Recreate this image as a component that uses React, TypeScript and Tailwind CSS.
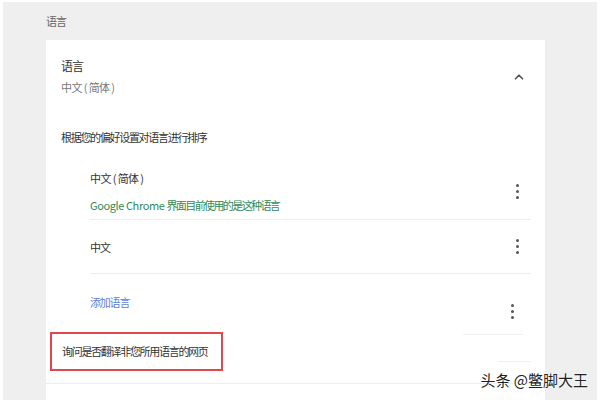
import { ChevronUp } from 'lucide-react';

const font = { fontFamily: '"Noto Sans CJK SC", "Noto Sans", sans-serif' };

function Kebab({ className = '' }: { className?: string }) {
    return (
        <div className={`flex flex-col items-center gap-[3px] w-[10px] ${className}`}>
            <span className="w-[3px] h-[3px] rounded-full bg-[#555]" />
            <span className="w-[3px] h-[3px] rounded-full bg-[#555]" />
            <span className="w-[3px] h-[3px] rounded-full bg-[#555]" />
        </div>
    );
}

export default function App() {
    return (
        <div
            className="relative w-[600px] h-[400px] overflow-hidden bg-[#efefef] border-t-2 border-r-[3px] border-l-[3px] border-white"
            style={font}
        >
            <div className="pl-[43px] w-[542px] flex flex-col h-full">
                {/* page heading */}
                <div className="h-[38px] flex items-center text-[11px] tracking-[-1px] text-[#666]">语言</div>

                {/* card */}
                <div className="flex-1 bg-white">
                    <div className="flex justify-between pl-[15px] pr-[19px] pt-[17px]">
                        <div>
                            <p className="text-[12px] tracking-[-1px] leading-[18px] text-[#333]">语言</p>
                            <p className="mt-[2px] text-[11px] tracking-[-0.6px] leading-[20px] text-[#777]">中文 ( 简体 )</p>
                        </div>
                        <ChevronUp className="w-[14px] h-[14px] mt-[13px] text-[#555]" strokeWidth={3} />
                    </div>

                    <p className="mt-[30px] pl-[15px] text-[11px] tracking-[-1.3px] leading-[20px] text-[#333]">根据您的偏好设置对语言进行排序</p>

                    {/* language list */}
                    <div className="ml-[44px] mr-[14px] mt-[17px]">
                        <div className="h-[56px] flex items-center justify-between border-b border-[#eeeeee] pr-[9px]">
                            <div className="flex flex-col gap-[7px]">
                                <p className="text-[11px] tracking-[-0.6px] leading-[20px] text-[#333]">中文 ( 简体 )</p>
                                <p className="text-[11px] leading-[20px] text-[#2f8a55]">
                                    <span className="tracking-[-0.4px]">Google Chrome </span>
                                    <span className="tracking-[-1.6px]">界面目前使用的是这种语言</span>
                                </p>
                            </div>
                            <Kebab />
                        </div>
                        <div className="h-[54px] flex items-center justify-between border-b border-[#eeeeee] pr-[9px]">
                            <p className="text-[11px] tracking-[-1px] leading-[20px] text-[#333]">中文</p>
                            <Kebab />
                        </div>
                        <div className="h-[56px] flex items-center justify-between pr-[14px]">
                            <p className="text-[11px] tracking-[-1.2px] leading-[20px] text-[#5b7fdc]">添加语言</p>
                            <Kebab className="mt-[18px]" />
                        </div>
                    </div>

                    {/* translate option */}
                    <div className="flex items-start justify-between">
                        <div className="ml-[4px] mt-[2px] w-[173px] h-[39px] border-2 border-[#e3474d] flex items-center pl-[10px] text-[11px] tracking-[-1.3px] whitespace-nowrap text-[#333]">
                            询问是否翻译非您所用语言的网页
                        </div>
                        <div className="flex flex-col items-end gap-[26px] mt-[4px] mr-[14px]">
                            <span className="w-[60px] h-px bg-[#f0f0f0] mr-[8px]" />
                            <span className="w-[33px] h-px bg-[#f0f0f0]" />
                        </div>
                    </div>
                    <div className="mt-[12px] border-t border-[#eeeeee]" />
                </div>
            </div>

            {/* watermark */}
            <div
                className="absolute right-[9px] bottom-[10px] text-[15px] leading-[20px] text-[#222]"
                style={{ textShadow: '0 0 2px #fff, 0 0 2px #fff' }}
            >
                头条 @鳖脚大王
            </div>
        </div>
    );
}
